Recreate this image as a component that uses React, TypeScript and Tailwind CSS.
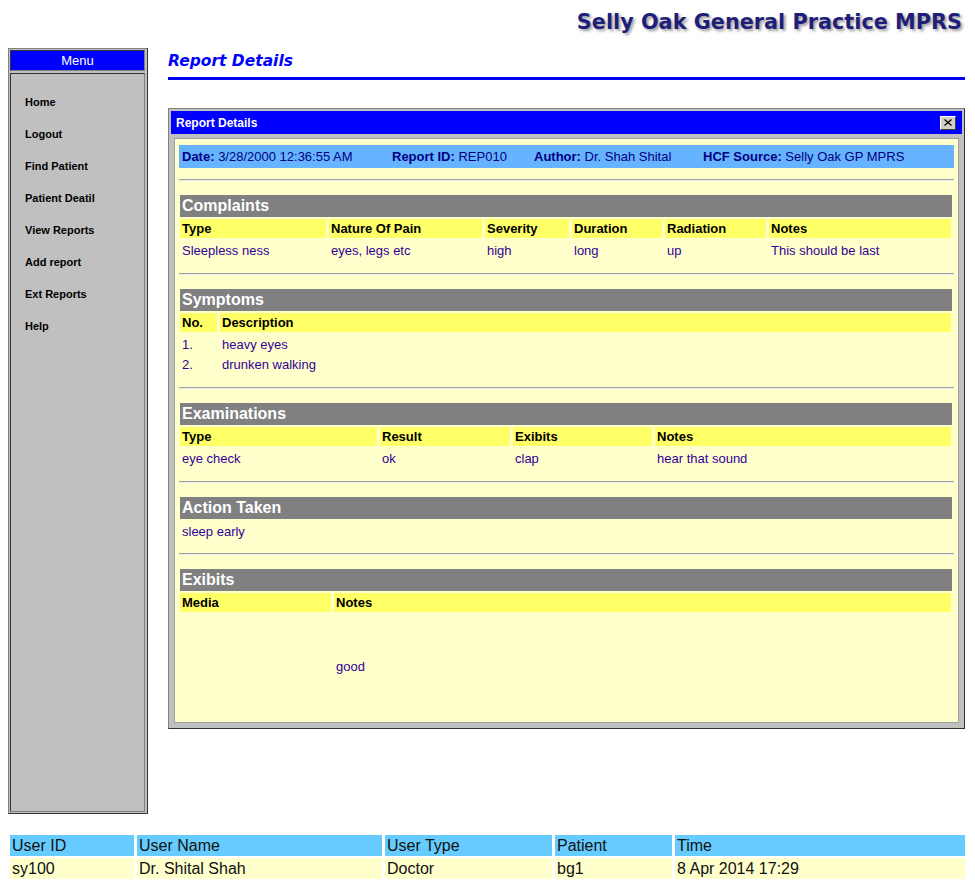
import React from "react";

const sans = "font-['Liberation_Sans',Arial,sans-serif]";

function SectionHeader({ title }: { title: string }) {
  return (
    <div className="h-[22px] bg-[#808080] text-white font-bold text-[16px] leading-[22px] pl-[2px]">
      {title}
    </div>
  );
}

function Hr({ mt = 13 }: { mt?: number }) {
  return (
    <div
      className={`mx-[4px] h-[2px] border-t border-t-[#a0a0a0] border-b border-b-[#ececec] ${
        mt === 11 ? "mt-[11px]" : mt === 12 ? "mt-[12px]" : "mt-[13px]"
      }`}
    />
  );
}

function HeadRow({ cols, cells }: { cols: string; cells: string[] }) {
  return (
    <div className={`grid ${cols} gap-x-[3px] mt-[2px]`}>
      {cells.map((c, i) => (
        <div key={i} className="bg-[#ffff66] h-[19px] leading-[19px] font-bold text-[13px] text-black pl-[2px]">
          {c}
        </div>
      ))}
    </div>
  );
}

function DataRow({ cols, cells, first = true }: { cols: string; cells: string[]; first?: boolean }) {
  return (
    <div className={`grid ${cols} gap-x-[3px] ${first ? "mt-[2px]" : ""}`}>
      {cells.map((c, i) => (
        <div key={i} className="h-[20px] leading-[21px] text-[13px] text-[#330099] pl-[2px] whitespace-nowrap">
          {c}
        </div>
      ))}
    </div>
  );
}

export default function App() {
  const menu = ["Home", "Logout", "Find Patient", "Patient Deatil", "View Reports", "Add report", "Ext Reports", "Help"];
  const cCols = "grid-cols-[146px_153px_84px_90px_101px_182px]";
  const sCols = "grid-cols-[37px_731px]";
  const eCols = "grid-cols-[197px_130px_139px_296px]";
  const xCols = "grid-cols-[151px_617px]";
  const bCols = "grid-cols-[124px_245px_167px_117px_290px]";

  return (
    <div className={`w-[975px] h-[889px] bg-white ${sans}`}>
      {/* Top title */}
      <div className="h-[48px] flex justify-end pr-[13px] pt-[10px]">
        <span className="font-['DejaVu_Sans',Verdana,sans-serif] font-bold text-[20.8px] leading-[24px] text-[#1f1f7a] [text-shadow:2px_2px_3px_#9a9a9a]">
          Selly Oak General Practice MPRS
        </span>
      </div>

      {/* Main row */}
      <div className="flex pl-[8px] gap-[20px]">
        {/* Sidebar */}
        <div className="w-[140px] h-[766px] border border-t-[#808080] border-l-[#808080] border-r-[#333333] border-b-[#333333] bg-[#c0c0c0] pl-[1px] pt-[1px] pb-[1px] pr-[2px] flex flex-col gap-[2px]">
          <div className="h-[21px] border border-t-[#333333] border-l-[#333333] border-r-[#808080] border-b-[#808080] bg-[#0000ff] text-white text-[13px] leading-[19px] text-center">
            Menu
          </div>
          <div className="flex-1 border border-t-[#333333] border-l-[#333333] border-r-[#808080] border-b-[#808080] pt-[12px] pl-[14px]">
            {menu.map((m) => (
              <div key={m} className="h-[32px] leading-[32px] text-[11px] font-bold text-black">
                {m}
              </div>
            ))}
          </div>
        </div>

        {/* Content */}
        <div className="w-[797px] flex flex-col">
          <div className="h-[32px] pt-[1px] border-b-[3px] border-b-[#0000ff]">
            <span className="font-['DejaVu_Sans',Verdana,sans-serif] font-bold italic text-[15.5px] leading-[20px] text-[#0000ff]">
              Report Details
            </span>
          </div>

          {/* Window */}
          <div className="mt-[28px] w-[797px] border border-t-[#808080] border-l-[#808080] border-r-[#333333] border-b-[#333333] bg-[#c0c0c0] p-[2px]">
            <div className="h-[23px] bg-[#0000ff] flex items-center justify-between pl-[5px] pr-[6px]">
              <span className="text-white font-bold text-[12px] leading-[14px]">Report Details</span>
              <div className="w-[16px] h-[14px] bg-[#d4d0c8] border border-t-white border-l-white border-r-[#404040] border-b-[#404040] flex items-center justify-center">
                <svg width="8" height="7" viewBox="0 0 8 7">
                  <path d="M0.5 0.5 L7.5 6.5 M7.5 0.5 L0.5 6.5" stroke="#000" strokeWidth="1.3" fill="none" />
                </svg>
              </div>
            </div>

            <div className="mt-[4px] mx-[3px] mb-[3px] border border-[#a0a0a0] bg-[#ffffcc] pt-[6px] pb-[3px]">
              {/* Info bar */}
              <div className="mx-[4px] h-[23px] bg-[#66b3ff] flex items-center pl-[3px] text-[13px] text-[#000080] whitespace-nowrap">
                <div className="w-[210px]">
                  <b>Date:</b> 3/28/2000 12:36:55 AM
                </div>
                <div className="w-[142px]">
                  <b>Report ID:</b> REP010
                </div>
                <div className="w-[169px]">
                  <b>Author:</b> Dr. Shah Shital
                </div>
                <div>
                  <b>HCF Source:</b> Selly Oak GP MPRS
                </div>
              </div>

              <Hr mt={11} />

              {/* Complaints */}
              <div className="ml-[5px] mr-[6px] mt-[14px]">
                <SectionHeader title="Complaints" />
                <HeadRow cols={cCols} cells={["Type", "Nature Of Pain", "Severity", "Duration", "Radiation", "Notes"]} />
                <DataRow cols={cCols} cells={["Sleepless ness", "eyes, legs etc", "high", "long", "up", "This should be last"]} />
              </div>

              <Hr />

              {/* Symptoms */}
              <div className="ml-[5px] mr-[6px] mt-[14px]">
                <SectionHeader title="Symptoms" />
                <HeadRow cols={sCols} cells={["No.", "Description"]} />
                <DataRow cols={sCols} cells={["1.", "heavy eyes"]} />
                <DataRow cols={sCols} cells={["2.", "drunken walking"]} first={false} />
              </div>

              <Hr />

              {/* Examinations */}
              <div className="ml-[5px] mr-[6px] mt-[14px]">
                <SectionHeader title="Examinations" />
                <HeadRow cols={eCols} cells={["Type", "Result", "Exibits", "Notes"]} />
                <DataRow cols={eCols} cells={["eye check", "ok", "clap", "hear that sound"]} />
              </div>

              <Hr />

              {/* Action Taken */}
              <div className="ml-[5px] mr-[6px] mt-[14px]">
                <SectionHeader title="Action Taken" />
                <div className="mt-[2px] h-[20px] leading-[21px] text-[13px] text-[#330099] pl-[2px]">sleep early</div>
              </div>

              <Hr mt={12} />

              {/* Exibits */}
              <div className="ml-[5px] mr-[6px] mt-[14px]">
                <SectionHeader title="Exibits" />
                <HeadRow cols={xCols} cells={["Media", "Notes"]} />
                <div className={`grid ${xCols} gap-x-[3px] mt-[2px] h-[105px]`}>
                  <div />
                  <div className="flex items-center pl-[2px] text-[13px] text-[#330099]">good</div>
                </div>
              </div>
            </div>
          </div>
        </div>
      </div>

      {/* Bottom status table */}
      <div className="mt-[21px] ml-[10px] w-[955px] text-[16px] text-[#111111]">
        <div className={`grid ${bCols} gap-x-[3px]`}>
          {["User ID", "User Name", "User Type", "Patient", "Time"].map((c) => (
            <div key={c} className="bg-[#66ccff] h-[21px] leading-[21px] pl-[2px]">
              {c}
            </div>
          ))}
        </div>
        <div className={`grid ${bCols} gap-x-[3px] mt-[2px]`}>
          {["sy100", "Dr. Shital Shah", "Doctor", "bg1", "8 Apr 2014 17:29"].map((c) => (
            <div key={c} className="bg-[#ffffcc] h-[21px] leading-[21px] pl-[2px]">
              {c}
            </div>
          ))}
        </div>
      </div>
    </div>
  );
}
